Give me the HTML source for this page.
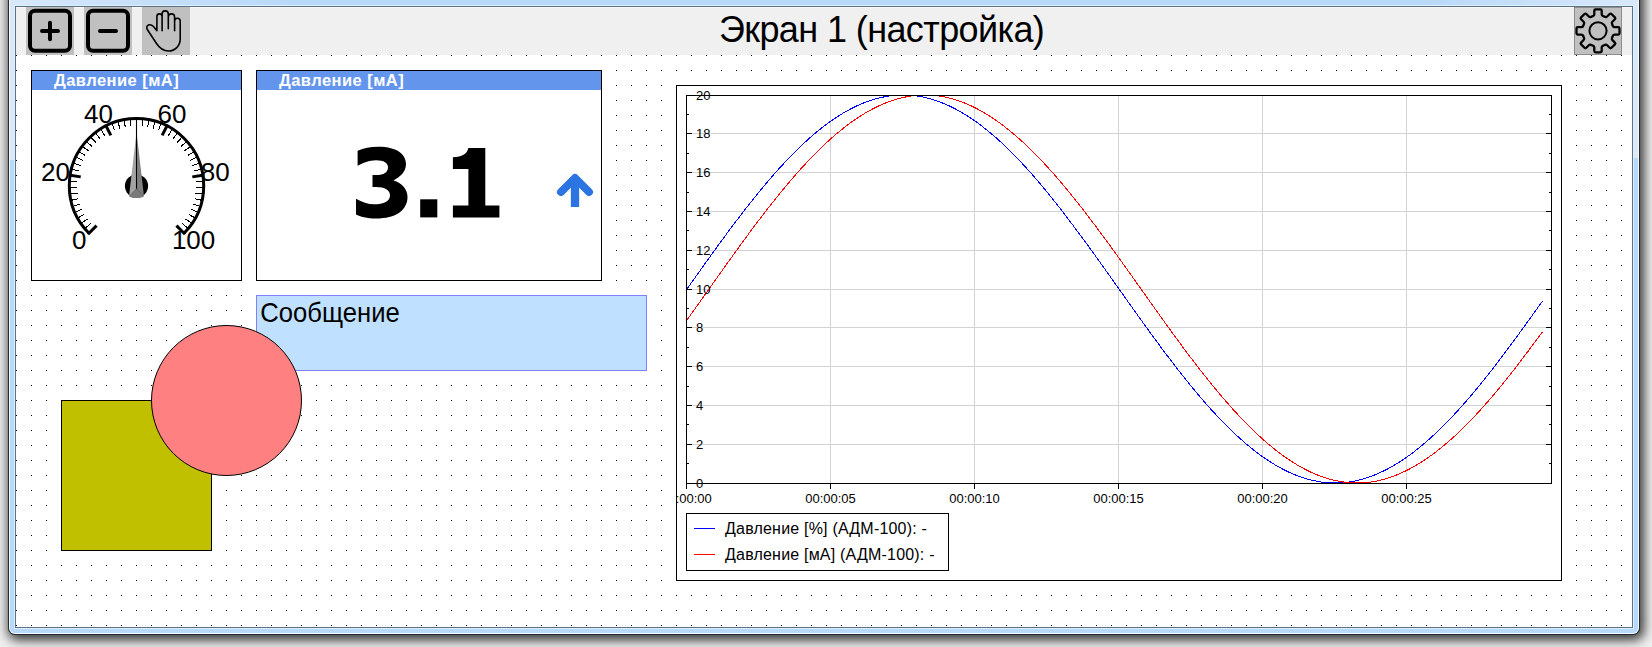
<!DOCTYPE html>
<html><head><meta charset="utf-8">
<style>
html,body{margin:0;padding:0;}
body{width:1652px;height:647px;overflow:hidden;position:relative;background:#f0f0f0;font-family:"Liberation Sans", sans-serif;}
.abs{position:absolute;}
svg text{font-family:"Liberation Sans", sans-serif;}
</style></head><body>
<div class="abs" style="left:8px;top:-20px;width:1632px;height:655px;background:#252a33;border-radius:0 0 7px 7px;box-shadow:2px 3px 12px 2px rgba(0,0,0,0.8);"></div>
<div class="abs" style="left:9px;top:-20px;width:1630px;height:654px;background:#f4fbff;border-radius:0 0 6px 6px;"></div>
<div class="abs" style="left:10px;top:-20px;width:1628px;height:653px;background:#b9d9fa;border-radius:0 0 5px 5px;"></div>
<div class="abs" style="left:10px;top:0;width:1628px;height:5px;background:linear-gradient(to right,#d8e9fa 0,#c8e0f9 120px,#b9d9fa 280px,#b9d9fa 1420px,#c8e0f9 1520px,#d8e9fa 100%);"></div>
<div class="abs" style="left:10px;top:0;width:4px;height:160px;background:linear-gradient(to bottom,#d8e9fa 0,#dde9f8 150px);"></div>
<div class="abs" style="left:1634px;top:0;width:4px;height:158px;background:linear-gradient(to bottom,#d8e9fa 0,#dde9f8 150px);"></div>
<div class="abs" style="left:14px;top:5px;width:1620px;height:624px;background:#ddf0ff;"></div>
<div class="abs" style="left:15px;top:6px;width:1618px;height:622px;background:#5e7286;"></div>
<div class="abs" style="left:16px;top:7px;width:1616px;height:620px;background:#fff;"></div>
<div class="abs" style="left:16px;top:7px;width:1616px;height:48px;background:#f0f0f0;"></div>
<div class="abs" style="left:16px;top:7px;width:1616px;height:1px;background:#f8f8f6;"></div>
<svg class="abs" style="left:0;top:0" width="1652" height="647" viewBox="0 0 1652 647">
<defs>
<clipPath id="chclip"><rect x="677" y="86" width="884" height="494"/></clipPath>
<pattern id="dots" x="16" y="55" width="15" height="15" patternUnits="userSpaceOnUse"><rect x="0" y="0" width="1" height="1" fill="#000"/></pattern>
</defs>
<rect x="16" y="55" width="1616" height="572" fill="url(#dots)"/>
<!-- toolbar buttons -->
<rect x="26" y="7" width="48" height="48" fill="#c0c0c0"/>
<rect x="30" y="10.8" width="40" height="40" rx="5" fill="none" stroke="#000" stroke-width="4"/>
<path d="M42,31 H58 M50,22.8 V39.2" stroke="#000" stroke-width="4" stroke-linecap="round"/>
<rect x="84" y="7" width="48" height="48" fill="#c0c0c0"/>
<rect x="88" y="10.8" width="40" height="40" rx="5" fill="none" stroke="#000" stroke-width="4"/>
<path d="M100,31 H116" stroke="#000" stroke-width="4" stroke-linecap="round"/>
<rect x="142" y="7" width="48" height="48" fill="#c0c0c0"/>
<path d="M156.9,30.7 V16.5 A2.6,2.6 0 0 1 162.1,16.5 V14.0 A3.1,3.1 0 0 1 168.3,14.0 V17.0 A3.15,3.15 0 0 1 174.6,17.0 V21.1 A2.8,2.8 0 0 1 180.2,21.1 V39 C180.2,46 175,51 168.5,51 C163,51 159.5,48 156.5,43.5 L147.3,29.5 C146,27.5 147,25.2 149.2,24.8 C151,24.5 152.5,25.5 153.5,26.5 L156.9,30.7 M162.1,16.5 V30.7 M168.3,14.0 V28.7 M174.6,17.0 V30.7" fill="none" stroke="#000" stroke-width="1.6" stroke-linejoin="round" stroke-linecap="round"/>
<rect x="1574.5" y="7.5" width="47" height="47" fill="#c0c0c0" stroke="#8c8c8c" stroke-width="1"/>
<path d="M1593.10,16.04 Q1594.30,15.54 1594.30,14.24 L1594.30,10.70 Q1594.30,9.40 1595.60,9.40 L1600.40,9.40 Q1601.70,9.40 1601.70,10.70 L1601.70,14.24 Q1601.70,15.54 1602.90,16.04 L1605.04,16.92 Q1606.25,17.42 1607.16,16.50 L1609.67,14.00 Q1610.59,13.08 1611.51,14.00 L1614.90,17.39 Q1615.82,18.31 1614.90,19.23 L1612.40,21.74 Q1611.48,22.65 1611.98,23.86 L1612.86,26.00 Q1613.36,27.20 1614.66,27.20 L1618.20,27.20 Q1619.50,27.20 1619.50,28.50 L1619.50,33.30 Q1619.50,34.60 1618.20,34.60 L1614.66,34.60 Q1613.36,34.60 1612.86,35.80 L1611.98,37.94 Q1611.48,39.15 1612.40,40.06 L1614.90,42.57 Q1615.82,43.49 1614.90,44.41 L1611.51,47.80 Q1610.59,48.72 1609.67,47.80 L1607.16,45.30 Q1606.25,44.38 1605.04,44.88 L1602.90,45.76 Q1601.70,46.26 1601.70,47.56 L1601.70,51.10 Q1601.70,52.40 1600.40,52.40 L1595.60,52.40 Q1594.30,52.40 1594.30,51.10 L1594.30,47.56 Q1594.30,46.26 1593.10,45.76 L1590.96,44.88 Q1589.75,44.38 1588.84,45.30 L1586.33,47.80 Q1585.41,48.72 1584.49,47.80 L1581.10,44.41 Q1580.18,43.49 1581.10,42.57 L1583.60,40.06 Q1584.52,39.15 1584.02,37.94 L1583.14,35.80 Q1582.64,34.60 1581.34,34.60 L1577.80,34.60 Q1576.50,34.60 1576.50,33.30 L1576.50,28.50 Q1576.50,27.20 1577.80,27.20 L1581.34,27.20 Q1582.64,27.20 1583.14,26.00 L1584.02,23.86 Q1584.52,22.65 1583.60,21.74 L1581.10,19.23 Q1580.18,18.31 1581.10,17.39 L1584.49,14.00 Q1585.41,13.08 1586.33,14.00 L1588.84,16.50 Q1589.75,17.42 1590.96,16.92 Z" fill="none" stroke="#000" stroke-width="2.3" stroke-linejoin="round"/>
<circle cx="1598" cy="30.8" r="8.6" fill="none" stroke="#000" stroke-width="2"/>
<text x="719" y="41.5" font-size="36" letter-spacing="-0.6" fill="#000">Экран 1 (настройка)</text>
<!-- gauge widget -->
<rect x="31.5" y="70.5" width="210" height="210" fill="#fff" stroke="#000" stroke-width="1"/>
<rect x="32" y="71" width="209" height="19" fill="#6495ed"/>
<text x="54" y="85.8" font-size="16.5" font-weight="bold" letter-spacing="0.45" fill="#fff">Давление [мА]</text>
<path d="M88.98,233.22 A67.2,67.2 0 1 1 184.02,233.22" fill="none" stroke="#000" stroke-width="3"/>
<line x1="96.55" y1="225.65" x2="87.99" y2="234.21" stroke="#000" stroke-width="3"/>
<line x1="90.65" y1="223.63" x2="84.49" y2="228.73" stroke="#000" stroke-width="1.0" shape-rendering="crispEdges"/>
<line x1="87.29" y1="219.14" x2="80.67" y2="223.64" stroke="#000" stroke-width="1.0" shape-rendering="crispEdges"/>
<line x1="84.36" y1="214.36" x2="77.35" y2="218.22" stroke="#000" stroke-width="1.0" shape-rendering="crispEdges"/>
<line x1="81.89" y1="209.33" x2="74.55" y2="212.51" stroke="#000" stroke-width="1.0" shape-rendering="crispEdges"/>
<line x1="79.91" y1="204.09" x2="72.30" y2="206.56" stroke="#000" stroke-width="1.0" shape-rendering="crispEdges"/>
<line x1="78.43" y1="198.68" x2="70.63" y2="200.42" stroke="#000" stroke-width="1.0" shape-rendering="crispEdges"/>
<line x1="77.47" y1="193.16" x2="69.53" y2="194.16" stroke="#000" stroke-width="1.0" shape-rendering="crispEdges"/>
<line x1="77.03" y1="187.57" x2="69.03" y2="187.82" stroke="#000" stroke-width="1.0" shape-rendering="crispEdges"/>
<line x1="77.12" y1="181.96" x2="69.13" y2="181.46" stroke="#000" stroke-width="1.0" shape-rendering="crispEdges"/>
<line x1="80.70" y1="176.86" x2="68.74" y2="174.97" stroke="#000" stroke-width="3"/>
<line x1="78.87" y1="170.90" x2="71.12" y2="168.91" stroke="#000" stroke-width="1.0" shape-rendering="crispEdges"/>
<line x1="80.52" y1="165.55" x2="72.99" y2="162.84" stroke="#000" stroke-width="1.0" shape-rendering="crispEdges"/>
<line x1="82.66" y1="160.37" x2="75.42" y2="156.96" stroke="#000" stroke-width="1.0" shape-rendering="crispEdges"/>
<line x1="85.29" y1="155.41" x2="78.40" y2="151.34" stroke="#000" stroke-width="1.0" shape-rendering="crispEdges"/>
<line x1="88.36" y1="150.73" x2="81.89" y2="146.02" stroke="#000" stroke-width="1.0" shape-rendering="crispEdges"/>
<line x1="91.87" y1="146.35" x2="85.87" y2="141.06" stroke="#000" stroke-width="1.0" shape-rendering="crispEdges"/>
<line x1="95.77" y1="142.33" x2="90.29" y2="136.49" stroke="#000" stroke-width="1.0" shape-rendering="crispEdges"/>
<line x1="100.03" y1="138.69" x2="95.13" y2="132.36" stroke="#000" stroke-width="1.0" shape-rendering="crispEdges"/>
<line x1="104.62" y1="135.46" x2="100.33" y2="128.71" stroke="#000" stroke-width="1.0" shape-rendering="crispEdges"/>
<line x1="110.85" y1="135.36" x2="105.36" y2="124.58" stroke="#000" stroke-width="3"/>
<line x1="114.60" y1="130.38" x2="111.65" y2="122.94" stroke="#000" stroke-width="1.0" shape-rendering="crispEdges"/>
<line x1="119.90" y1="128.56" x2="117.67" y2="120.88" stroke="#000" stroke-width="1.0" shape-rendering="crispEdges"/>
<line x1="125.35" y1="127.25" x2="123.85" y2="119.40" stroke="#000" stroke-width="1.0" shape-rendering="crispEdges"/>
<line x1="130.90" y1="126.46" x2="130.15" y2="118.50" stroke="#000" stroke-width="1.0" shape-rendering="crispEdges"/>
<line x1="136.50" y1="126.20" x2="136.50" y2="118.20" stroke="#000" stroke-width="1.0" shape-rendering="crispEdges"/>
<line x1="142.10" y1="126.46" x2="142.85" y2="118.50" stroke="#000" stroke-width="1.0" shape-rendering="crispEdges"/>
<line x1="147.65" y1="127.25" x2="149.15" y2="119.40" stroke="#000" stroke-width="1.0" shape-rendering="crispEdges"/>
<line x1="153.10" y1="128.56" x2="155.33" y2="120.88" stroke="#000" stroke-width="1.0" shape-rendering="crispEdges"/>
<line x1="158.40" y1="130.38" x2="161.35" y2="122.94" stroke="#000" stroke-width="1.0" shape-rendering="crispEdges"/>
<line x1="162.15" y1="135.36" x2="167.64" y2="124.58" stroke="#000" stroke-width="3"/>
<line x1="168.38" y1="135.46" x2="172.67" y2="128.71" stroke="#000" stroke-width="1.0" shape-rendering="crispEdges"/>
<line x1="172.97" y1="138.69" x2="177.87" y2="132.36" stroke="#000" stroke-width="1.0" shape-rendering="crispEdges"/>
<line x1="177.23" y1="142.33" x2="182.71" y2="136.49" stroke="#000" stroke-width="1.0" shape-rendering="crispEdges"/>
<line x1="181.13" y1="146.35" x2="187.13" y2="141.06" stroke="#000" stroke-width="1.0" shape-rendering="crispEdges"/>
<line x1="184.64" y1="150.73" x2="191.11" y2="146.02" stroke="#000" stroke-width="1.0" shape-rendering="crispEdges"/>
<line x1="187.71" y1="155.41" x2="194.60" y2="151.34" stroke="#000" stroke-width="1.0" shape-rendering="crispEdges"/>
<line x1="190.34" y1="160.37" x2="197.58" y2="156.96" stroke="#000" stroke-width="1.0" shape-rendering="crispEdges"/>
<line x1="192.48" y1="165.55" x2="200.01" y2="162.84" stroke="#000" stroke-width="1.0" shape-rendering="crispEdges"/>
<line x1="194.13" y1="170.90" x2="201.88" y2="168.91" stroke="#000" stroke-width="1.0" shape-rendering="crispEdges"/>
<line x1="192.30" y1="176.86" x2="204.26" y2="174.97" stroke="#000" stroke-width="3"/>
<line x1="195.88" y1="181.96" x2="203.87" y2="181.46" stroke="#000" stroke-width="1.0" shape-rendering="crispEdges"/>
<line x1="195.97" y1="187.57" x2="203.97" y2="187.82" stroke="#000" stroke-width="1.0" shape-rendering="crispEdges"/>
<line x1="195.53" y1="193.16" x2="203.47" y2="194.16" stroke="#000" stroke-width="1.0" shape-rendering="crispEdges"/>
<line x1="194.57" y1="198.68" x2="202.37" y2="200.42" stroke="#000" stroke-width="1.0" shape-rendering="crispEdges"/>
<line x1="193.09" y1="204.09" x2="200.70" y2="206.56" stroke="#000" stroke-width="1.0" shape-rendering="crispEdges"/>
<line x1="191.11" y1="209.33" x2="198.45" y2="212.51" stroke="#000" stroke-width="1.0" shape-rendering="crispEdges"/>
<line x1="188.64" y1="214.36" x2="195.65" y2="218.22" stroke="#000" stroke-width="1.0" shape-rendering="crispEdges"/>
<line x1="185.71" y1="219.14" x2="192.33" y2="223.64" stroke="#000" stroke-width="1.0" shape-rendering="crispEdges"/>
<line x1="182.35" y1="223.63" x2="188.51" y2="228.73" stroke="#000" stroke-width="1.0" shape-rendering="crispEdges"/>
<line x1="176.45" y1="225.65" x2="185.01" y2="234.21" stroke="#000" stroke-width="3"/>
<text x="79.3" y="249" text-anchor="middle" font-size="26" fill="#000">0</text>
<text x="55.5" y="181" text-anchor="middle" font-size="26" fill="#000">20</text>
<text x="98.5" y="122.7" text-anchor="middle" font-size="26" fill="#000">40</text>
<text x="172" y="122.7" text-anchor="middle" font-size="26" fill="#000">60</text>
<text x="215.3" y="181" text-anchor="middle" font-size="26" fill="#000">80</text>
<text x="193.6" y="249.3" text-anchor="middle" font-size="26" fill="#000">100</text>
<circle cx="136.5" cy="186" r="11.6" fill="#000"/>
<polygon points="136.5,132 129,196.5 136.5,188.7" fill="#a3a3a3"/>
<polygon points="136.5,132 144,196.5 136.5,188.7" fill="#7f7f7f"/>
<polygon points="129,196.5 136.5,188.7 144,196.5 140,198 133,198" fill="#7a7a7a"/>
<line x1="136.5" y1="118.5" x2="136.5" y2="188.7" stroke="#000" stroke-width="1.1"/>
<!-- digital widget -->
<rect x="256.5" y="70.5" width="345" height="210" fill="#fff" stroke="#000" stroke-width="1"/>
<rect x="257" y="71" width="344" height="19" fill="#6495ed"/>
<text x="279" y="85.8" font-size="16.5" font-weight="bold" letter-spacing="0.45" fill="#fff">Давление [мА]</text>
<path d="M357.6,150.7 C364,148 370,146.8 378,146.8 C398,146.8 406,155 406,164 C406,172 400,177 393.5,180.5 C402,183 407.5,189 407.5,197 C407.5,210 396,218.5 376,218.5 C367,218.5 360,216.5 356,214.5 L356,198.7 C362,202 368,204.3 374,204.3 C384,204.3 390,201 390,195.5 C390,190 385,187 376,187 L372.5,187 L372.5,175.1 L376,175.1 C384,175.1 388,172 388,167.5 C388,163 384,160.2 376,160.2 C369,160.2 363,163 357.6,165.7 Z" fill="#000"/>
<rect x="420.2" y="199.3" width="17.1" height="18.1" fill="#000"/>
<path d="M468.4,148 H485.3 V205.5 H499.4 V217.4 H452.9 V205.5 H468.4 V169 H452.9 V157.2 C462,157.2 467,154 468.4,148 Z" fill="#000"/>
<path d="M561,192 L575,178 L589,192" fill="none" stroke="#2b74e2" stroke-width="8" stroke-linecap="round" stroke-linejoin="round"/>
<path d="M575,182 V207" fill="none" stroke="#2b74e2" stroke-width="8.3"/>
<!-- message -->
<rect x="256.5" y="295.5" width="390" height="75" fill="#c0e0ff" stroke="#8080ff" stroke-width="1"/>
<text transform="translate(260.3,322) scale(0.915,1)" x="0" y="0" font-size="28" fill="#000">Сообщение</text>
<!-- shapes -->
<rect x="61.5" y="400.5" width="150" height="150" fill="#c0c000" stroke="#000" stroke-width="1"/>
<circle cx="226.5" cy="400.5" r="75" fill="#ff8080" stroke="#000" stroke-width="1"/>
<!-- chart -->
<rect x="676.5" y="85.5" width="885" height="495" fill="#fff" stroke="#000" stroke-width="1"/>
<path d="M686,444.5 H1551 M686,405.5 H1551 M686,366.5 H1551 M686,327.5 H1551 M686,289.5 H1551 M686,250.5 H1551 M686,211.5 H1551 M686,172.5 H1551 M686,133.5 H1551 M830.5,95 V483 M974.5,95 V483 M1118.5,95 V483 M1262.5,95 V483 M1406.5,95 V483" stroke="#d3d3d3" stroke-width="1" fill="none" shape-rendering="crispEdges"/>
<path d="M686,483.5 h6 M1552,483.5 h-6 M686,463.5 h3 M1552,463.5 h-3 M686,444.5 h6 M1552,444.5 h-6 M686,424.5 h3 M1552,424.5 h-3 M686,405.5 h6 M1552,405.5 h-6 M686,386.5 h3 M1552,386.5 h-3 M686,366.5 h6 M1552,366.5 h-6 M686,347.5 h3 M1552,347.5 h-3 M686,327.5 h6 M1552,327.5 h-6 M686,308.5 h3 M1552,308.5 h-3 M686,289.5 h6 M1552,289.5 h-6 M686,269.5 h3 M1552,269.5 h-3 M686,250.5 h6 M1552,250.5 h-6 M686,230.5 h3 M1552,230.5 h-3 M686,211.5 h6 M1552,211.5 h-6 M686,192.5 h3 M1552,192.5 h-3 M686,172.5 h6 M1552,172.5 h-6 M686,153.5 h3 M1552,153.5 h-3 M686,133.5 h6 M1552,133.5 h-6 M686,114.5 h3 M1552,114.5 h-3 M686,95.5 h6 M1552,95.5 h-6 M686.5,483 v6 M830.5,483 v6 M974.5,483 v6 M1118.5,483 v6 M1262.5,483 v6 M1406.5,483 v6" stroke="#000" stroke-width="1" fill="none" shape-rendering="crispEdges"/>
<polyline points="686.0,290.41 693.2,280.26 700.4,270.13 707.6,260.05 714.8,250.05 722.0,240.15 729.2,230.39 736.4,220.80 743.6,211.38 750.8,202.19 758.0,193.22 765.2,184.53 772.4,176.11 779.6,168.01 786.8,160.24 794.0,152.82 801.2,145.78 808.4,139.13 815.6,132.88 822.8,127.07 830.0,121.70 837.2,116.79 844.4,112.35 851.6,108.40 858.8,104.94 866.0,101.98 873.2,99.54 880.4,97.61 887.6,96.22 894.8,95.34 902.0,95.01 909.2,95.20 916.4,95.92 923.6,97.17 930.8,98.95 938.0,101.25 945.2,104.06 952.4,107.38 959.6,111.20 966.8,115.51 974.0,120.29 981.2,125.53 988.4,131.23 995.6,137.35 1002.8,143.89 1010.0,150.83 1017.2,158.14 1024.4,165.82 1031.6,173.83 1038.8,182.16 1046.0,190.78 1053.2,199.67 1060.4,208.81 1067.6,218.16 1074.8,227.71 1082.0,237.43 1089.2,247.29 1096.4,257.26 1103.6,267.32 1110.8,277.44 1118.0,287.59 1125.2,297.74 1132.4,307.87 1139.6,317.95 1146.8,327.95 1154.0,337.85 1161.2,347.61 1168.4,357.20 1175.6,366.62 1182.8,375.81 1190.0,384.78 1197.2,393.47 1204.4,401.89 1211.6,409.99 1218.8,417.76 1226.0,425.18 1233.2,432.22 1240.4,438.87 1247.6,445.12 1254.8,450.93 1262.0,456.30 1269.2,461.21 1276.4,465.65 1283.6,469.60 1290.8,473.06 1298.0,476.02 1305.2,478.46 1312.4,480.39 1319.6,481.78 1326.8,482.66 1334.0,482.99 1341.2,482.80 1348.4,482.08 1355.6,480.83 1362.8,479.05 1370.0,476.75 1377.2,473.94 1384.4,470.62 1391.6,466.80 1398.8,462.49 1406.0,457.71 1413.2,452.47 1420.4,446.77 1427.6,440.65 1434.8,434.11 1442.0,427.17 1449.2,419.86 1456.4,412.18 1463.6,404.17 1470.8,395.84 1478.0,387.22 1485.2,378.33 1492.4,369.19 1499.6,359.84 1506.8,350.29 1514.0,340.57 1521.2,330.71 1528.4,320.74 1535.6,310.68 1542.5,300.98" fill="none" stroke="#0000ff" stroke-width="1" shape-rendering="crispEdges"/>
<polyline points="686.0,321.30 693.2,311.24 700.4,301.13 707.6,290.98 714.8,280.82 722.0,270.69 729.2,260.60 736.4,250.60 743.6,240.70 750.8,230.93 758.0,221.32 765.2,211.90 772.4,202.69 779.6,193.72 786.8,185.00 794.0,176.57 801.2,168.45 808.4,160.66 815.6,153.22 822.8,146.16 830.0,139.48 837.2,133.22 844.4,127.38 851.6,121.99 858.8,117.05 866.0,112.58 873.2,108.60 880.4,105.11 887.6,102.13 894.8,99.66 902.0,97.71 909.2,96.28 916.4,95.38 923.6,95.01 930.8,95.17 938.0,95.87 945.2,97.09 952.4,98.84 959.6,101.11 966.8,103.89 974.0,107.19 981.2,110.98 988.4,115.26 995.6,120.01 1002.8,125.23 1010.0,130.90 1017.2,137.00 1024.4,143.52 1031.6,150.43 1038.8,157.73 1046.0,165.38 1053.2,173.38 1060.4,181.69 1067.6,190.29 1074.8,199.17 1082.0,208.29 1089.2,217.64 1096.4,227.18 1103.6,236.88 1110.8,246.74 1118.0,256.70 1125.2,266.76 1132.4,276.87 1139.6,287.02 1146.8,297.18 1154.0,307.31 1161.2,317.40 1168.4,327.40 1175.6,337.30 1182.8,347.07 1190.0,356.68 1197.2,366.10 1204.4,375.31 1211.6,384.28 1218.8,393.00 1226.0,401.43 1233.2,409.55 1240.4,417.34 1247.6,424.78 1254.8,431.84 1262.0,438.52 1269.2,444.78 1276.4,450.62 1283.6,456.01 1290.8,460.95 1298.0,465.42 1305.2,469.40 1312.4,472.89 1319.6,475.87 1326.8,478.34 1334.0,480.29 1341.2,481.72 1348.4,482.62 1355.6,482.99 1362.8,482.83 1370.0,482.13 1377.2,480.91 1384.4,479.16 1391.6,476.89 1398.8,474.11 1406.0,470.81 1413.2,467.02 1420.4,462.74 1427.6,457.99 1434.8,452.77 1442.0,447.10 1449.2,441.00 1456.4,434.48 1463.6,427.57 1470.8,420.27 1478.0,412.62 1485.2,404.62 1492.4,396.31 1499.6,387.71 1506.8,378.83 1514.0,369.71 1521.2,360.36 1528.4,350.82 1535.6,341.12 1542.5,331.68" fill="none" stroke="#ff0000" stroke-width="1" shape-rendering="crispEdges"/>
<rect x="686.5" y="95.5" width="865" height="388" fill="none" stroke="#000" stroke-width="1" shape-rendering="crispEdges"/>
<text x="696" y="487.7" font-size="13" fill="#000">0</text>
<text x="696" y="448.7" font-size="13" fill="#000">2</text>
<text x="696" y="409.7" font-size="13" fill="#000">4</text>
<text x="696" y="370.7" font-size="13" fill="#000">6</text>
<text x="696" y="331.7" font-size="13" fill="#000">8</text>
<text x="696" y="293.7" font-size="13" fill="#000">10</text>
<text x="696" y="254.7" font-size="13" fill="#000">12</text>
<text x="696" y="215.7" font-size="13" fill="#000">14</text>
<text x="696" y="176.7" font-size="13" fill="#000">16</text>
<text x="696" y="137.7" font-size="13" fill="#000">18</text>
<text x="696" y="99.7" font-size="13" fill="#000">20</text>
<g clip-path="url(#chclip)">
<text x="686.5" y="502.5" text-anchor="middle" font-size="13" fill="#000">00:00:00</text>
<text x="830.5" y="502.5" text-anchor="middle" font-size="13" fill="#000">00:00:05</text>
<text x="974.5" y="502.5" text-anchor="middle" font-size="13" fill="#000">00:00:10</text>
<text x="1118.5" y="502.5" text-anchor="middle" font-size="13" fill="#000">00:00:15</text>
<text x="1262.5" y="502.5" text-anchor="middle" font-size="13" fill="#000">00:00:20</text>
<text x="1406.5" y="502.5" text-anchor="middle" font-size="13" fill="#000">00:00:25</text>
</g>
<rect x="686.5" y="513.5" width="262" height="57" fill="#fff" stroke="#000" stroke-width="1"/>
<line x1="694" y1="528.5" x2="715" y2="528.5" stroke="#0000ff" stroke-width="1"/>
<line x1="694" y1="554.5" x2="715" y2="554.5" stroke="#ff0000" stroke-width="1"/>
<text x="725" y="533.5" font-size="16" letter-spacing="0.2" fill="#000">Давление [%] (АДМ-100): -</text>
<text x="725" y="559.5" font-size="16" letter-spacing="0.2" fill="#000">Давление [мА] (АДМ-100): -</text>
</svg>
</body></html>
